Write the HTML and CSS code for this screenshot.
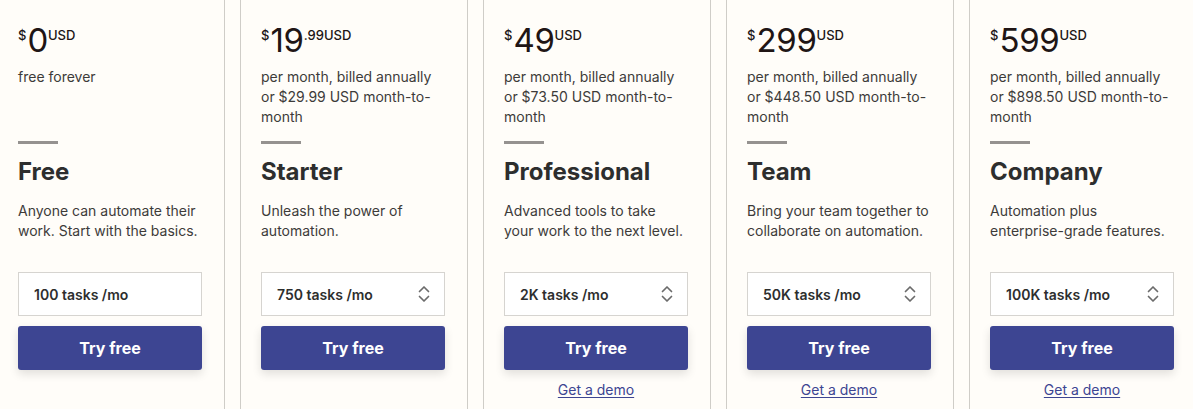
FILE: index.html
```html
<!DOCTYPE html>
<html>
<head>
<meta charset="utf-8">
<link rel="stylesheet" href="styles.css">
</head>
<body>
<div class="plans">
  <div class="card">
    <div class="price"><span class="sm">$</span><span class="big">0</span><span class="sm">USD</span></div>
    <p class="billing">free forever</p>
    <div class="rule"></div>
    <h2 class="name">Free</h2>
    <p class="desc">Anyone can automate their work. Start with the basics.</p>
    <div class="select"><span>100 tasks /mo</span></div>
    <button class="cta">Try free</button>
  </div>
  <div class="card">
    <div class="price"><span class="sm">$</span><span class="big">19</span><span class="sm">.99USD</span></div>
    <p class="billing">per month, billed annually or $29.99 USD month-to-month</p>
    <div class="rule"></div>
    <h2 class="name">Starter</h2>
    <p class="desc">Unleash the power of automation.</p>
    <div class="select"><span>750 tasks /mo</span><svg class="chev" width="12" height="18" viewBox="0 0 12 18"><path d="M1.5 6.5 L6 2 L10.5 6.5 M1.5 11.5 L6 16 L10.5 11.5" fill="none" stroke="#6b6b6b" stroke-width="1.7" stroke-linecap="round" stroke-linejoin="round"/></svg></div>
    <button class="cta">Try free</button>
  </div>
  <div class="card">
    <div class="price"><span class="sm">$</span><span class="big">49</span><span class="sm">USD</span></div>
    <p class="billing">per month, billed annually or $73.50 USD month-to-month</p>
    <div class="rule"></div>
    <h2 class="name">Professional</h2>
    <p class="desc">Advanced tools to take your work to the next level.</p>
    <div class="select"><span>2K tasks /mo</span><svg class="chev" width="12" height="18" viewBox="0 0 12 18"><path d="M1.5 6.5 L6 2 L10.5 6.5 M1.5 11.5 L6 16 L10.5 11.5" fill="none" stroke="#6b6b6b" stroke-width="1.7" stroke-linecap="round" stroke-linejoin="round"/></svg></div>
    <button class="cta">Try free</button>
    <a class="demo" href="#">Get a demo</a>
  </div>
  <div class="card">
    <div class="price"><span class="sm">$</span><span class="big">299</span><span class="sm">USD</span></div>
    <p class="billing">per month, billed annually or $448.50 USD month-to-month</p>
    <div class="rule"></div>
    <h2 class="name">Team</h2>
    <p class="desc">Bring your team together to collaborate on automation.</p>
    <div class="select"><span>50K tasks /mo</span><svg class="chev" width="12" height="18" viewBox="0 0 12 18"><path d="M1.5 6.5 L6 2 L10.5 6.5 M1.5 11.5 L6 16 L10.5 11.5" fill="none" stroke="#6b6b6b" stroke-width="1.7" stroke-linecap="round" stroke-linejoin="round"/></svg></div>
    <button class="cta">Try free</button>
    <a class="demo" href="#">Get a demo</a>
  </div>
  <div class="card">
    <div class="price"><span class="sm">$</span><span class="big">599</span><span class="sm">USD</span></div>
    <p class="billing">per month, billed annually or $898.50 USD month-to-month</p>
    <div class="rule"></div>
    <h2 class="name">Company</h2>
    <p class="desc">Automation plus enterprise-grade features.</p>
    <div class="select"><span>100K tasks /mo</span><svg class="chev" width="12" height="18" viewBox="0 0 12 18"><path d="M1.5 6.5 L6 2 L10.5 6.5 M1.5 11.5 L6 16 L10.5 11.5" fill="none" stroke="#6b6b6b" stroke-width="1.7" stroke-linecap="round" stroke-linejoin="round"/></svg></div>
    <button class="cta">Try free</button>
    <a class="demo" href="#">Get a demo</a>
  </div>
</div>
</body>
</html>
```

FILE: styles.css
```css
html, body {
  margin: 0;
  padding: 0;
  background: #fffdf9;
  overflow: hidden;
}
body {
  font-family: Inter, "Noto Sans", sans-serif;
  color: #2d2e2e;
  width: 1193px;
  height: 409px;
}
.plans {
  display: flex;
  gap: 15px;
  margin-left: -3px;
  height: 409px;
}
.card {
  flex: 0 0 228px;
  box-sizing: border-box;
  border-left: 1px solid #cfcdc8;
  border-right: 1px solid #cfcdc8;
  padding: 20px 22px 0 20px;
  display: flex;
  flex-direction: column;
  height: 409px;
}
.price {
  display: flex;
  align-items: flex-start;
  height: 40px;
}
.price .big {
  font-size: 33px;
  line-height: 40px;
  font-weight: 400;
  color: #201515;
  letter-spacing: -0.3px;
}
.price .sm {
  font-size: 13px;
  line-height: 13px;
  font-weight: 500;
  margin-top: 9px;
  color: #201515;
}
.price .sm:first-child {
  margin-right: 1px;
}
.billing {
  margin: 7px 0 0;
  font-size: 14px;
  line-height: 20px;
  color: #3d3b39;
  min-height: 60px;
}
.rule {
  width: 40px;
  height: 3px;
  background: #959290;
  margin-top: 14px;
}
.name {
  margin: 12px 0 0;
  font-size: 24px;
  line-height: 32px;
  font-weight: 700;
  color: #2d2e2e;
}
.desc {
  margin: 13px 0 0;
  font-size: 14px;
  line-height: 20px;
  color: #3d3b39;
  height: 40px;
}
.select {
  margin-top: 31px;
  height: 44px;
  box-sizing: border-box;
  border: 1px solid #d6d4d0;
  background: #ffffff;
  display: flex;
  align-items: center;
  justify-content: space-between;
  padding: 0 14px 0 15px;
  font-size: 14px;
  font-weight: 600;
  color: #2d2e2e;
}
.chev {
  display: block;
}
.cta {
  margin-top: 10px;
  height: 44px;
  border: none;
  border-radius: 3px;
  background: #3d4592;
  color: #ffffff;
  font-family: Inter, "Noto Sans", sans-serif;
  font-size: 16px;
  font-weight: 700;
  box-shadow: 0 4px 10px rgba(0, 0, 0, 0.12);
  cursor: pointer;
}
.demo {
  margin-top: 10px;
  align-self: center;
  font-size: 14px;
  line-height: 20px;
  color: #3d4592;
  text-decoration: underline;
  text-underline-offset: 2px;
}
```
